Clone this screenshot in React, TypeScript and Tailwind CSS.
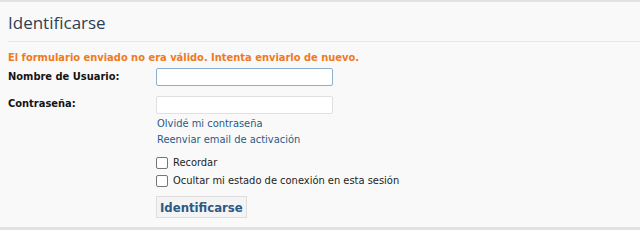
import React from 'react';

const font = { fontFamily: '"DejaVu Sans Condensed", "DejaVu Sans", Tahoma, sans-serif' };

export default function App() {
  return (
    <div className="w-[640px] h-[230px] bg-[#e2e2e2] overflow-hidden">
      <div className="mt-px h-[226px] bg-[#f9f9f9] border-t border-[#e3e3e3]" style={font}>
        <div className="ml-2 h-10 border-b border-[#e6e6e6] flex items-center">
          <h1 className="text-[17px] text-[#2f3f52] font-['Open_Sans',sans-serif] leading-none pt-0.5">Identificarse</h1>
        </div>

        <div className="px-2 pt-[9px]">
          <p className="text-[11px] font-bold text-[#f07a1e] leading-[14px]">
            El formulario enviado no era válido. Intenta enviarlo de nuevo.
          </p>

          <div className="mt-[3px] flex items-start">
            <label className="w-[148px] text-[11px] font-bold text-[#141414] pt-[1px]">Nombre de Usuario:</label>
            <input
              type="text"
              className="w-[177px] h-[18px] bg-white border border-[#8cb0cf] rounded-[2px] outline-none"
            />
          </div>

          <div className="mt-[10px] flex items-start">
            <label className="w-[148px] text-[11px] font-bold text-[#141414]">Contraseña:</label>
            <div className="flex flex-col">
              <input
                type="password"
                className="w-[177px] h-[18px] bg-white border border-[#e0e0e0] rounded-[2px] outline-none"
              />
              <a className="mt-[2px] text-[11px] text-[#2b5a86] leading-[16px] pl-px">Olvidé mi contraseña</a>
              <a className="text-[11px] text-[#2b5a86] leading-[16px] pl-px">Reenviar email de activación</a>

              <label className="mt-[6px] flex items-center gap-[5px] text-[11px] text-[#1d1d1d] leading-[18px]">
                <span className="w-[12px] h-[12px] border border-[#767676] rounded-[2px] bg-white" />
                Recordar
              </label>
              <label className="flex items-center gap-[5px] text-[11px] text-[#1d1d1d] leading-[18px]">
                <span className="w-[12px] h-[12px] border border-[#767676] rounded-[2px] bg-white" />
                Ocultar mi estado de conexión en esta sesión
              </label>

              <button className="mt-[6px] self-start h-[22px] px-[3px] bg-[#f4f4f4] border border-[#dedede] text-[13px] font-bold text-[#2b5a86] leading-none">
                Identificarse
              </button>
            </div>
          </div>
        </div>
      </div>
    </div>
  );
}
